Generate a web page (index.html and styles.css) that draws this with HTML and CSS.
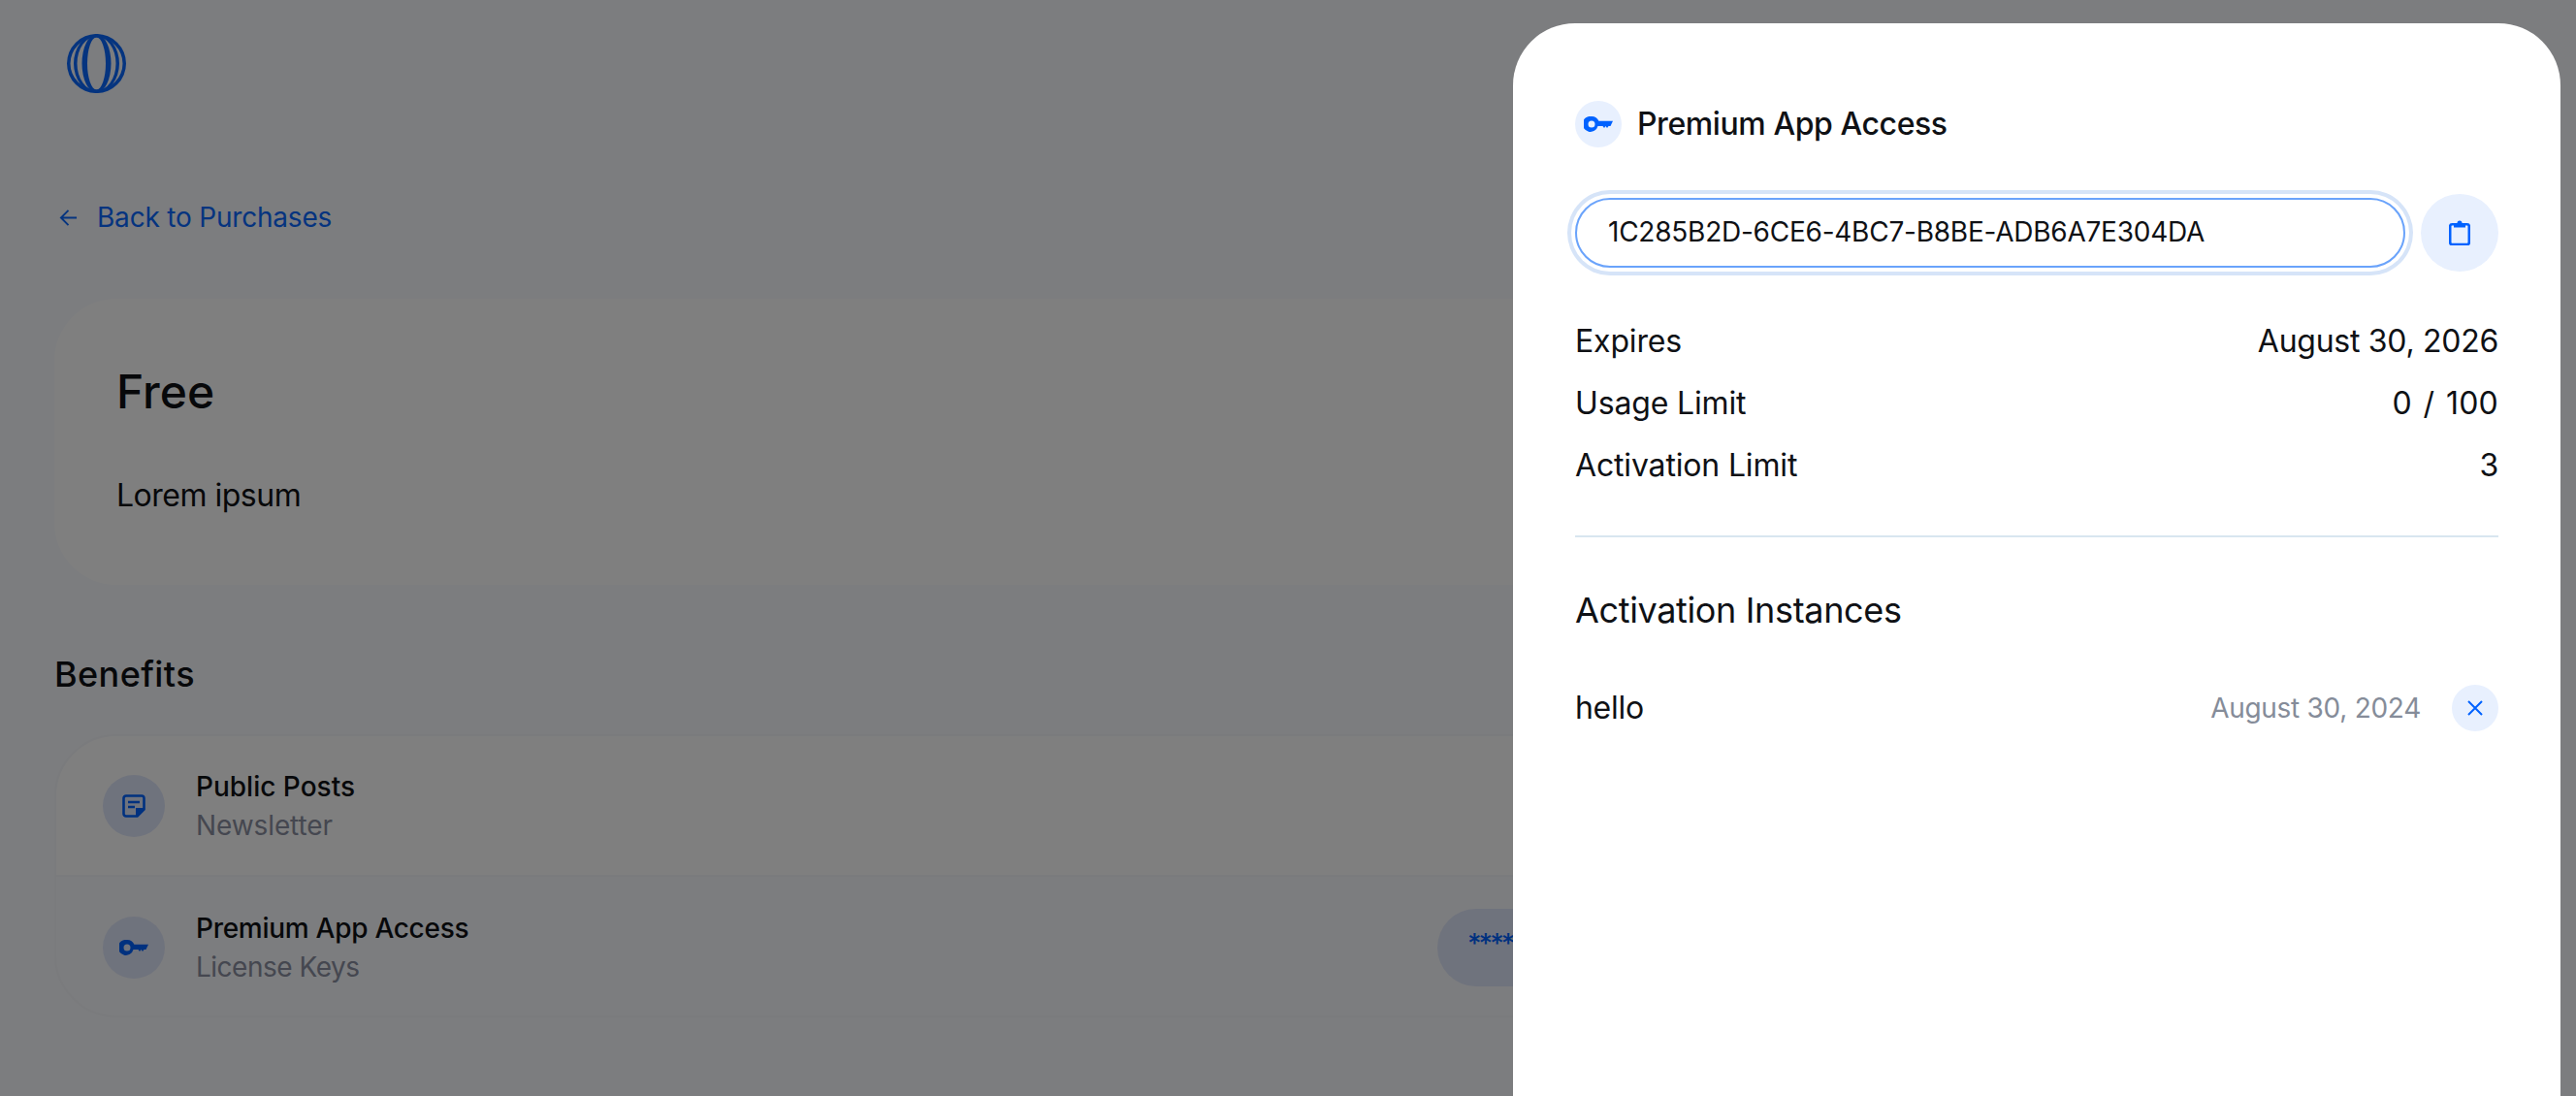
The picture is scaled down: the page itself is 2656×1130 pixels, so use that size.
FILE: index.html
```html
<!DOCTYPE html>
<html lang="en">
<head>
<meta charset="utf-8">
<title>Premium App Access</title>
<link rel="stylesheet" href="styles.css">
</head>
<body>
<div class="page">
  <header class="topbar">
    <svg class="logo" viewBox="0 0 61 61" aria-hidden="true">
      <path fill-rule="evenodd" d="M0 30.5a30.500 30.500 0 1 0 61 0a30.500 30.500 0 1 0-61 0ZM3.500 30.5a27 27 0 1 1 54 0a27 27 0 1 1-54 0Z"/>
      <path fill-rule="evenodd" d="M7 30.5a23.500 30 0 1 0 47 0a23.500 30 0 1 0-47 0ZM10.500 30.5a20 28 0 1 1 40 0a20 28 0 1 1-40 0Z"/>
      <path fill-rule="evenodd" d="M15.500 30.5a15 30 0 1 0 30 0a15 30 0 1 0-30 0ZM21 30.5a9.500 27 0 1 1 19 0a9.500 27 0 1 1-19 0Z"/>
    </svg>
  </header>
  <a class="back" href="#">
    <svg class="back-arrow" viewBox="0 0 20 20" aria-hidden="true"><path d="M19 10H2M10 2l-8 8 8 8"/></svg>
    <span>Back to Purchases</span>
  </a>
  <section class="plan">
    <h1 class="plan-name">Free</h1>
    <p class="plan-desc">Lorem ipsum</p>
  </section>
  <h2 class="section-title">Benefits</h2>
  <section class="benefits">
    <div class="benefit benefit-first">
      <span class="badge">
        <svg class="doc-icon" viewBox="0 0 24 24" aria-hidden="true"><path class="line" d="M4 1.500h16a2.500 2.500 0 0 1 2.500 2.500v11.500l-7 7H4A2.500 2.500 0 0 1 1.500 20V4A2.500 2.500 0 0 1 4 1.500Z"/><path class="line" d="M6 8h12M6 13h7"/><path class="solid" d="M14 23v-9h9.500Z"/></svg>
      </span>
      <div class="benefit-text">
        <div class="benefit-name">Public Posts</div>
        <div class="benefit-type">Newsletter</div>
      </div>
    </div>
    <div class="benefit">
      <span class="badge">
        <svg class="key-icon" viewBox="0 0 30 16" aria-hidden="true"><path class="solid" fill-rule="evenodd" d="M8 0a8 8 0 0 1 7.400 4.800H30l-2.500 5.200h-2l-1.500 2-1.500-2-1.500 2-1.500-2h-5A8 8 0 1 1 8 0Zm0 4.500a3.500 3.500 0 1 0 0 7 3.500 3.500 0 0 0 0-7Z"/></svg>
      </span>
      <div class="benefit-text">
        <div class="benefit-name benefit-name-long">Premium App Access</div>
        <div class="benefit-type benefit-type-keys">License Keys</div>
      </div>
      <span class="key-pill">****-****-****-04DA</span>
    </div>
  </section>
</div>
<div class="scrim"></div>
<aside class="panel">
  <div class="panel-head">
    <span class="chip">
      <svg class="key-icon" viewBox="0 0 30 16" aria-hidden="true"><path class="solid" fill-rule="evenodd" d="M8 0a8 8 0 0 1 7.400 4.800H30l-2.500 5.200h-2l-1.500 2-1.500-2-1.500 2-1.500-2h-5A8 8 0 1 1 8 0Zm0 4.500a3.500 3.500 0 1 0 0 7 3.500 3.500 0 0 0 0-7Z"/></svg>
    </span>
    <h2 class="panel-title">Premium App Access</h2>
  </div>
  <div class="key-row">
    <div class="key-field">1C285B2D-6CE6-4BC7-B8BE-ADB6A7E304DA</div>
    <button class="copy" type="button" aria-label="Copy">
      <svg class="clip-icon" viewBox="0 0 22 26" aria-hidden="true"><path class="line" d="M6 4.200H3.200a2 2 0 0 0-2 2V23a2 2 0 0 0 2 2h15.600a2 2 0 0 0 2-2V6.200a2 2 0 0 0-2-2H16"/><path class="solid" d="M5 3h3.500a2.500 2.500 0 0 1 5 0H17v4.500H5Z"/></svg>
    </button>
  </div>
  <dl class="facts">
    <div class="fact"><dt>Expires</dt><dd>August 30, 2026</dd></div>
    <div class="fact"><dt>Usage Limit</dt><dd class="usage-value">0 / 100</dd></div>
    <div class="fact"><dt>Activation Limit</dt><dd>3</dd></div>
  </dl>
  <hr class="rule">
  <h3 class="instances-title">Activation Instances</h3>
  <div class="instance">
    <span class="instance-name">hello</span>
    <span class="instance-date">August 30, 2024</span>
    <button class="remove" type="button" aria-label="Remove">
      <svg class="x-icon" viewBox="0 0 16 16" aria-hidden="true"><path d="M1 1l14 14M15 1L1 15"/></svg>
    </button>
  </div>
</aside>
</body>
</html>
```
FILE: styles.css
```css
* { box-sizing: border-box; }
html, body { margin: 0; height: 100%; }
body {
  background: #f8fafe;
  color: #0f1115;
  font-family: Inter, "Liberation Sans", sans-serif;
  overflow: hidden;
}
h1, h2, h3, p, dl, dd { margin: 0; }
button { border: 0; padding: 0; font: inherit; }

.page { padding: 0 56px; height: 100%; }
.topbar { height: 131px; display: flex; align-items: flex-start; padding: 35px 0 0 13px; }
.logo { width: 61px; height: 61px; fill: #0a68ff; display: block; }
.back {
  display: flex; align-items: center; gap: 20px;
  height: 36px; margin-top: 75px; padding-left: 5px;
  color: #0a68ff; text-decoration: none; font-size: 28px; line-height: 36px;
  letter-spacing: -.2px;
}
.back-arrow { width: 19px; height: 19px; fill: none; stroke: currentColor; stroke-width: 2; display: block; }

.plan {
  margin-top: 66px; height: 295px; width: 2544px;
  background: #fff; border-radius: 64px;
  padding: 64px;
}
.plan-name { font-size: 48px; line-height: 64px; font-weight: 500; }
.plan-desc { font-size: 32px; line-height: 44px; margin-top: 53px; letter-spacing: -.5px; }
.section-title { font-size: 36px; line-height: 48px; font-weight: 500; margin-top: 68px; letter-spacing: .4px; }

.benefits {
  margin-top: 38px; width: 2544px; height: 292px;
  border: 2px solid #f5f6fa; border-radius: 64px; overflow: hidden;
}
.benefit { height: 145px; display: flex; align-items: center; padding: 0 48px; gap: 32px; }
.benefit-first { background: #fff; border-bottom: 2px solid #f5f6fa; }
.badge {
  width: 64px; height: 64px; border-radius: 50%; background: #dfe6fa; color: #0062ff;
  display: flex; align-items: center; justify-content: center; flex: none;
}
.benefit-text { flex: 1; }
.benefit-name { font-size: 28px; line-height: 40px; font-weight: 500; }
.benefit-name-long { letter-spacing: -.28px; }
.benefit-type { font-size: 28px; line-height: 40px; color: #8a8fa0; letter-spacing: -.1px; }
.benefit-type-keys { letter-spacing: -.5px; }
.key-pill {
  height: 80px; border-radius: 40px; background: #dfe6fa; color: #0062ff;
  padding: 0 31px; font-size: 28px; line-height: 72px; font-weight: 500; letter-spacing: -3px;
  margin-right: 668px; width: 400px; white-space: nowrap; flex: none;
}

.solid { fill: currentColor; stroke: none; }
.line { fill: none; stroke: currentColor; stroke-width: 2.6; }
.doc-icon { width: 24px; height: 24px; display: block; }
.key-icon { width: 30px; height: 16px; display: block; }

.scrim { position: fixed; inset: 0; background: rgba(0, 0, 0, .5); }

.panel {
  position: fixed; top: 24px; right: 16px; bottom: 0; width: 1080px;
  background: #fff; border-radius: 64px 64px 0 0;
  padding: 80px 64px 0;
  display: flex; flex-direction: column;
}
.panel-head { display: flex; align-items: center; gap: 16px; height: 48px; }
.chip {
  width: 48px; height: 48px; border-radius: 50%; background: #e8f0fe; color: #0062ff;
  display: flex; align-items: center; justify-content: center;
}
.panel-title { font-size: 32px; line-height: 44px; font-weight: 500; letter-spacing: -.42px; }

.key-row { display: flex; align-items: center; gap: 16px; margin-top: 48px; height: 80px; }
.key-field {
  flex: 1; height: 72px; border: 2px solid #6aa3fb; border-radius: 36px;
  box-shadow: 0 0 0 4px #fff, 0 0 0 8px #d6e4f8;
  padding: 0 32px; font-size: 28px; line-height: 66px; color: #0f1115;
  letter-spacing: -.24px;
}
.copy {
  width: 80px; height: 80px; border-radius: 50%; background: #e8f0fe; color: #0062ff;
  display: flex; align-items: center; justify-content: center; flex: none;
}
.clip-icon { width: 22px; height: 26px; display: block; }

.facts { margin-top: 39px; }
.fact {
  display: flex; justify-content: space-between; align-items: center;
  height: 64px; font-size: 32px; letter-spacing: -.16px;
}
.fact dd { letter-spacing: -.28px; }
.fact .usage-value { letter-spacing: .2px; word-spacing: 2.500px; }
.rule { border: 0; border-top: 2px solid #d8e6f0; margin: 41px 0 0; }
.instances-title { font-size: 36px; line-height: 48px; font-weight: 400; margin-top: 51px; letter-spacing: -.35px; }
.instance { display: flex; align-items: center; margin-top: 53px; height: 48px; }
.instance-name { font-size: 32px; flex: 1; letter-spacing: -.3px; padding-bottom: 2px; }
.instance-date { font-size: 28px; color: #858c99; margin-right: 32px; letter-spacing: -.28px; }
.remove {
  width: 48px; height: 48px; border-radius: 50%; background: #e8f0fe; color: #0062ff;
  display: flex; align-items: center; justify-content: center;
}
.x-icon { width: 16px; height: 16px; fill: none; stroke: currentColor; stroke-width: 2; display: block; }
```
